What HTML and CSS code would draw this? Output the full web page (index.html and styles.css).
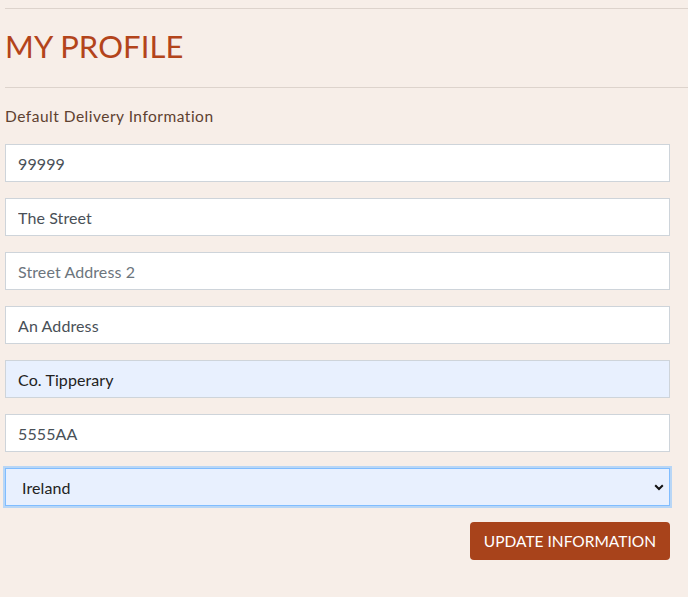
FILE: index.html
```html
<!DOCTYPE html>
<html>
<head>
<meta charset="utf-8">
<link rel="stylesheet" href="styles.css">
</head>
<body>
<div class="page">
  <hr class="rule">
  <h2 class="title">MY PROFILE</h2>
  <hr class="rule">
  <form class="form">
    <p class="label">Default Delivery Information</p>
    <input class="field" type="text" value="99999">
    <input class="field" type="text" value="The Street">
    <input class="field" type="text" placeholder="Street Address 2">
    <input class="field" type="text" value="An Address">
    <input class="field autofill" type="text" value="Co. Tipperary">
    <input class="field" type="text" value="5555AA">
    <div class="select-wrap">
      <select class="field select">
        <option>Ireland</option>
      </select>
      <svg class="chev" width="10" height="7" viewBox="0 0 10 7"><path d="M1.2 1.2 L5 5 L8.8 1.2" fill="none" stroke="#111" stroke-width="2"/></svg>
    </div>
    <div class="actions">
      <button type="button" class="btn">UPDATE INFORMATION</button>
    </div>
  </form>
</div>
</body>
</html>
```
FILE: styles.css
```css
html, body {
  margin: 0;
  padding: 0;
  background: #f7eee8;
}
body {
  font-family: "Lato", "Noto Sans", sans-serif;
  color: #495057;
}
.page {
  padding-top: 8px;
  padding-left: 5px;
}
.rule {
  margin: 0;
  border: 0;
  border-top: 1px solid #ddd3cc;
  margin-left: 0;
}
.title {
  margin: 0;
  height: 78px;
  padding-bottom: 4px;
  box-sizing: border-box;
  display: flex;
  align-items: center;
  font-weight: 400;
  font-size: 31px;
  color: #b3441b;
  letter-spacing: 0.1px;
}
.form {
  width: 665px;
  padding-top: 18px;
}
.label {
  margin: 0 0 18px 0;
  font-size: 15.5px;
  color: #5e4130;
  line-height: 20px;
  letter-spacing: 0.5px;
}
.field {
  display: block;
  box-sizing: border-box;
  width: 665px;
  height: 38px;
  margin: 0 0 16px 0;
  padding: 0 12px;
  border: 1px solid #ced4da;
  border-radius: 0;
  background: #fff;
  font-family: inherit;
  font-size: 16px;
  color: #495057;
  outline: none;
  letter-spacing: 0.1px;
}
.field::placeholder {
  color: #6c757d;
}
.autofill {
  background: #e8f0fe;
  color: #222;
}
.select-wrap {
  position: relative;
  margin-bottom: 16px;
}
.select {
  appearance: none;
  -webkit-appearance: none;
  margin: 0;
  background: #e8f0fe;
  border-color: #80bdff;
  box-shadow: 0 0 0 2px #b8d6f6;
  color: #222;
  padding-left: 16px;
}
.chev {
  position: absolute;
  right: 6px;
  top: 16px;
}
.actions {
  display: flex;
  justify-content: flex-end;
}
.btn {
  height: 38px;
  padding: 0 14px;
  border: 0;
  border-radius: 4px;
  background: #a8431b;
  color: #fff;
  font-family: inherit;
  font-size: 15.5px;
  letter-spacing: 0;
}
```
